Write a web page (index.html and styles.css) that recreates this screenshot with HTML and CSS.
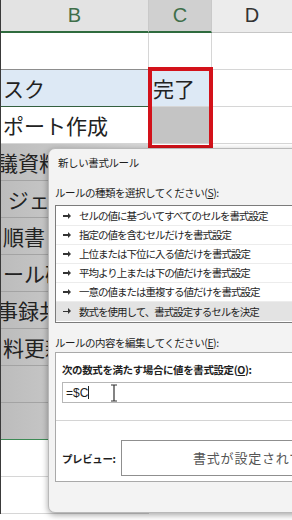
FILE: index.html
```html
<!DOCTYPE html>
<html>
<head>
    <title>新しい書式ルール</title>
    <link rel="stylesheet" href="styles.css">
</head>
<body>
<!-- Worksheet behind the dialog -->
<div class="sheet">
    <div class="row head">
        <div class="cell b sel">B</div>
        <div class="cell c sel">C</div>
        <div class="cell d">D</div>
    </div>
    <div class="row r1">
        <div class="cell b"></div>
        <div class="cell c"></div>
        <div class="cell d"></div>
    </div>
    <div class="row r2">
        <div class="cell b">スク</div>
        <div class="cell c">完了</div>
        <div class="cell d"></div>
    </div>
    <div class="row r3">
        <div class="cell b">ポート作成</div>
        <div class="cell c"></div>
        <div class="cell d"></div>
    </div>
    <div class="row dim"><div class="cell b shift">議資料</div></div>
    <div class="row dim"><div class="cell b">&nbsp;ジェ</div></div>
    <div class="row dim"><div class="cell b">順書</div></div>
    <div class="row dim"><div class="cell b">ール確</div></div>
    <div class="row dim"><div class="cell b shift">事録共</div></div>
    <div class="row dim"><div class="cell b">料更新</div></div>
    <div class="row dim"><div class="cell b"></div></div>
    <div class="row dim last"><div class="cell b"></div></div>
    <div class="row"><div class="cell b"></div></div>
    <div class="row"><div class="cell b"></div></div>

    <!-- Selected range outline -->
    <div class="red-box"></div>
</div>

<!-- New formatting rule dialog -->
<div class="dialog">
    <div class="title">新しい書式ルール</div>
    <div class="label first">ルールの種類を選択してください(<u>S</u>):</div>
    <ul class="rules">
        <li><span class="arrow"></span>セルの値に基づいてすべてのセルを書式設定</li>
        <li><span class="arrow"></span>指定の値を含むセルだけを書式設定</li>
        <li><span class="arrow"></span>上位または下位に入る値だけを書式設定</li>
        <li><span class="arrow"></span>平均より上または下の値だけを書式設定</li>
        <li><span class="arrow"></span>一意の値または重複する値だけを書式設定</li>
        <li class="active"><span class="arrow"></span>数式を使用して、書式設定するセルを決定</li>
    </ul>
    <div class="label">ルールの内容を編集してください(<u>E</u>):</div>
    <div class="edit">
        <div class="bold">次の数式を満たす場合に値を書式設定(<u>O</u>):</div>
        <div class="formula">
            <span>=$C</span><span class="caret"></span>
            <svg class="ibeam" width="8" height="18" viewBox="0 0 8 18">
                <path d="M1 1h6M4 1v16M1 17h6" stroke="#333" stroke-width="1.2" fill="none"/>
            </svg>
        </div>
        <div class="preview">
            <div class="bold">プレビュー:</div>
            <div class="preview-box">書式が設定されていません</div>
        </div>
    </div>
</div>
</body>
</html>
```

FILE: styles.css
```css
body {
    margin: 0;
    width: 292px;
    height: 520px;
    overflow: hidden;
    position: relative;
    background: #fff;
    font-family: "Noto Sans CJK JP", "Noto Sans", sans-serif;
}

.sheet {
    position: relative;
    border-left: 1px solid #3a3a3a;
}

.row {
    display: flex;
    height: 37px;
}

.cell {
    box-sizing: border-box;
    height: 100%;
    border-bottom: 1px solid #d6d6d6;
    border-right: 1px solid #d6d6d6;
    font-size: 21px;
    color: #222;
    line-height: 36px;
    padding-left: 2px;
    white-space: nowrap;
    overflow: hidden;
}

.b { width: 148px; }
.c { width: 63px; padding-left: 4px; }
.d { flex: 1; border-right: none; }

/* column headers */
.head { height: 33px; }
.head .cell {
    text-align: center;
    padding: 0;
    font-family: "Liberation Sans", sans-serif;
    font-size: 20px;
    line-height: 31px;
    background: #ececec;
    border-right-color: #c9c9c9;
    border-bottom-color: #c6c6c6;
}
.head .b { background: #e3e3e3; }
.head .c { background: #d0d0d0; }
.head .sel {
    color: #3f6f4a;
    border-bottom: 2px solid #2f6b3e;
}
.head .d { color: #333; }

.r1 .b { border-bottom-color: #8d8d8d; }
.r2 .b { background: #dde9f5; border-bottom: 1px solid #34603f; }
.r2 .c { background: #dde9f5; }
.r3 .c { background: #c4c4c4; }

.dim .cell {
    background: linear-gradient(90deg, #bcbcbc, #d8d8d8);
    border-bottom-color: #a3a3a3;
}
.dim.last .cell { border-bottom: 1px solid #3d8a55; }
.shift { text-indent: -6px; }

.red-box {
    position: absolute;
    left: 147px;
    top: 67px;
    width: 65px;
    height: 82px;
    box-sizing: border-box;
    border: 4px solid #d3121a;
}

/* dialog */
.dialog {
    position: absolute;
    left: 48px;
    top: 148px;
    width: 300px;
    height: 365px;
    box-sizing: border-box;
    padding: 0 0 0 6px;
    background: #f3f3f3;
    border: 1px solid #b9b9b9;
    border-radius: 7px 0 0 7px;
    box-shadow: 0 2px 6px rgba(0, 0, 0, 0.35);
    color: #1e1e1e;
    font-size: 10px;
}

.title {
    font-size: 10.5px;
    padding: 6px 0 0 3px;
    box-sizing: border-box;
    height: 31px;
    letter-spacing: -0.4px;
}

.label {
    height: 18px;
    line-height: 18px;
    letter-spacing: -0.5px;
    font-size: 10.5px;
}
.label.first { margin-top: 4px; }

.rules {
    list-style: none;
    margin: 3px 0 11px 0;
    padding: 1px 0 0;
    height: 118px;
    box-sizing: border-box;
    background: #fff;
    border: 1px solid #7b7b7b;
    border-right: none;
}

.rules li {
    height: 19px;
    line-height: 18px;
    box-sizing: border-box;
    border-bottom: 1px solid #ececec;
    padding-left: 7px;
    font-size: 10.5px;
    letter-spacing: -1px;
    display: flex;
    align-items: center;
}
.rules li.active {
    background: #e3e3e3;
    border-bottom: none;
}

.arrow {
    width: 7px;
    height: 1.5px;
    background: #333;
    margin-right: 9px;
    position: relative;
}
.arrow::after {
    content: "";
    position: absolute;
    right: -1px;
    top: -2.5px;
    border-left: 3px solid #333;
    border-top: 3.25px solid transparent;
    border-bottom: 3.25px solid transparent;
}

.edit {
    height: 130px;
    box-sizing: border-box;
    background: #fff;
    border: 1px solid #a9a9a9;
    border-right: none;
    padding: 9px 0 0 6px;
}

.bold {
    font-weight: bold;
    font-size: 10.5px;
    letter-spacing: -0.4px;
    height: 20px;
}

.formula {
    height: 21px;
    box-sizing: border-box;
    border: 1px solid #b7b7b7;
    border-right: none;
    font-family: "Liberation Sans", sans-serif;
    font-size: 12px;
    padding-left: 3px;
    display: flex;
    align-items: center;
}

.caret {
    width: 1px;
    height: 13px;
    background: #222;
}

.ibeam { margin-left: 21px; }

.preview {
    margin-top: 17px;
    margin-left: -6px;
    border-top: 1px solid #d4d4d4;
    padding: 19px 0 0 6px;
    display: flex;
    align-items: center;
}
.preview .bold {
    flex: none;
    width: 59px;
    height: auto;
}

.preview-box {
    flex: 1;
    min-width: 0;
    height: 36px;
    box-sizing: border-box;
    border: 1px solid #8f8f8f;
    border-right: none;
    line-height: 34px;
    padding-left: 71px;
    font-size: 13px;
    letter-spacing: 0.8px;
    color: #555;
    white-space: nowrap;
    overflow: hidden;
}
```
